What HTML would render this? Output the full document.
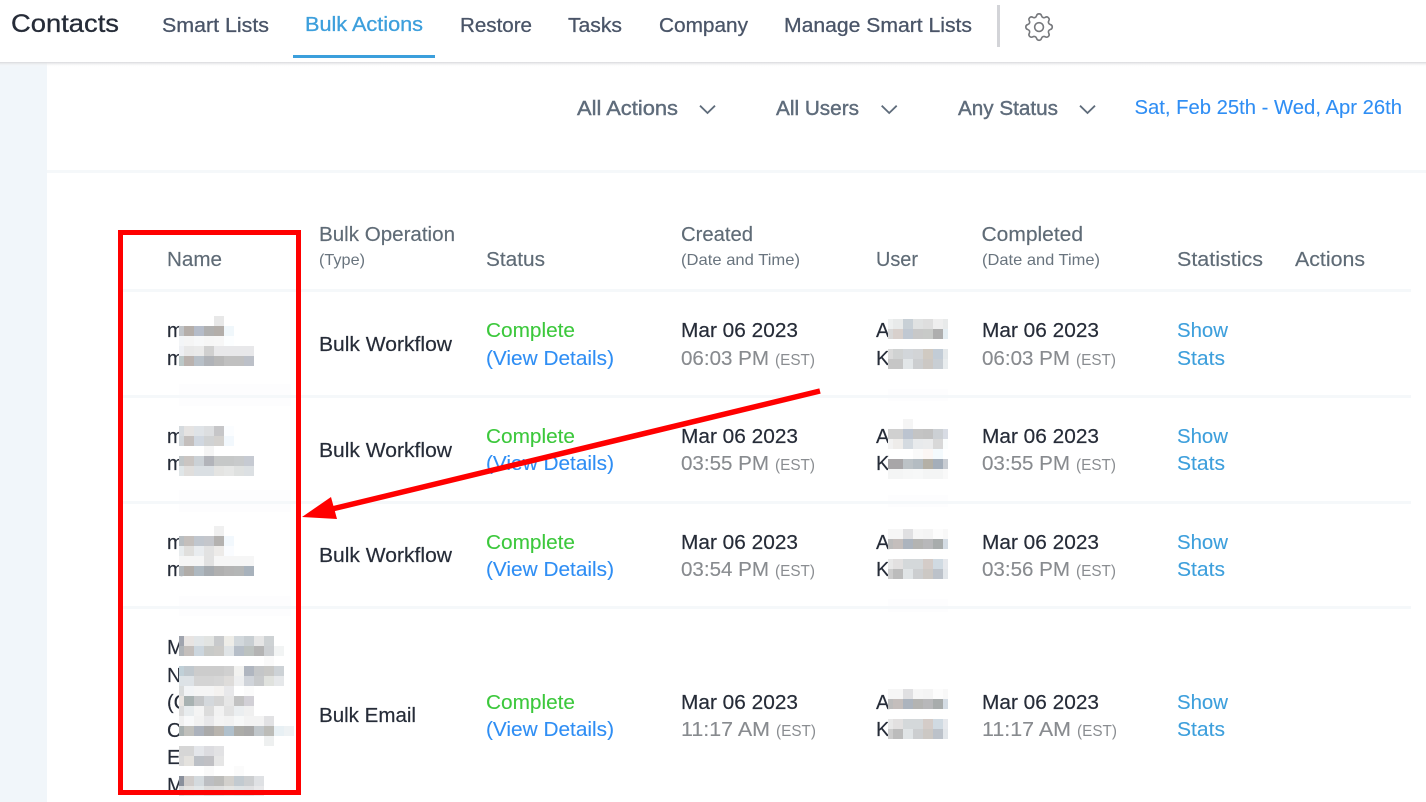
<!DOCTYPE html>
<html lang="en"><head><meta charset="utf-8"><title>Contacts - Bulk Actions</title>
<style>
html,body{margin:0;padding:0;background:#fff;width:1426px;height:802px;overflow:hidden}
svg{display:block}
text{font-family:"Liberation Sans",Arial,sans-serif;font-size:20px;fill:#262c38;stroke:#262c38;stroke-width:.18}
.n{fill:#4a5568;stroke:#4a5568;stroke-width:.28}
.a{fill:#3d9fdc;stroke:#3d9fdc;stroke-width:.3}
.f{fill:#5f6c7b;stroke:#5f6c7b;stroke-width:.4}
.b{fill:#2f8ef4;stroke:#2f8ef4;stroke-width:.1}
.h{fill:#5f6b76;stroke:#5f6b76;stroke-width:.15}
.s{fill:#69747e;stroke:none;font-size:16px}
.g{fill:#3cc83c;stroke:#3cc83c;stroke-width:.1}
.t{fill:#888b8f;stroke:#888b8f;stroke-width:.12}
.e{fill:#8a8d91;stroke:none;font-size:16px}
.l{fill:#3d9fdc;stroke:#3d9fdc;stroke-width:.1}
.m rect{width:10px;height:10px}
.m rect.p{width:5px}
.m{shape-rendering:crispEdges}
</style></head><body>
<svg width="1426" height="802" viewBox="0 0 1426 802" xmlns="http://www.w3.org/2000/svg">
<defs><linearGradient id="sh" x1="0" y1="0" x2="0" y2="1"><stop offset="0" stop-color="#d8d9dc"/><stop offset="1" stop-color="#fff" stop-opacity="0"/></linearGradient></defs>
<rect width="1426" height="802" fill="#fff"/>
<rect x="0" y="62" width="47" height="740" fill="#f1f6fa"/>
<rect x="0" y="62" width="1426" height="5" fill="url(#sh)"/>

<text x="11" y="32" style="font-size:25px;stroke-width:.3" textLength="108" lengthAdjust="spacingAndGlyphs">Contacts</text>
<text class="n" x="162" y="32" textLength="107" lengthAdjust="spacingAndGlyphs">Smart Lists</text>
<text class="a" x="305" y="31" textLength="118" lengthAdjust="spacingAndGlyphs">Bulk Actions</text>
<rect x="293" y="55" width="142" height="3" fill="#3b9fdc"/>
<text class="n" x="460" y="32" textLength="72" lengthAdjust="spacingAndGlyphs">Restore</text>
<text class="n" x="568" y="32" textLength="54" lengthAdjust="spacingAndGlyphs">Tasks</text>
<text class="n" x="659" y="32" textLength="89" lengthAdjust="spacingAndGlyphs">Company</text>
<text class="n" x="784" y="32" textLength="188" lengthAdjust="spacingAndGlyphs">Manage Smart Lists</text>
<rect x="997" y="5" width="3" height="42" fill="#d3d4d8"/>
<g transform="translate(1021.4 9.4) scale(1.47)" fill="none" stroke="#77797d" stroke-width="1.1" stroke-linejoin="round" stroke-linecap="round">
<path d="M10.325 4.317c.426-1.756 2.924-1.756 3.35 0a1.724 1.724 0 002.573 1.066c1.543-.94 3.31.826 2.37 2.37a1.724 1.724 0 001.065 2.572c1.756.426 1.756 2.924 0 3.35a1.724 1.724 0 00-1.066 2.573c.94 1.543-.826 3.31-2.37 2.37a1.724 1.724 0 00-2.572 1.065c-.426 1.756-2.924 1.756-3.35 0a1.724 1.724 0 00-2.573-1.066c-1.543.94-3.31-.826-2.37-2.37a1.724 1.724 0 00-1.065-2.572c-1.756-.426-1.756-2.924 0-3.35a1.724 1.724 0 001.066-2.573c-.94-1.543.826-3.31 2.37-2.37.996.608 2.296.07 2.572-1.065z"/>
<path d="M15 12a3 3 0 11-6 0 3 3 0 016 0z"/></g>

<text class="f" x="577" y="115" textLength="101" lengthAdjust="spacingAndGlyphs">All Actions</text>
<path d="M700 105.7l7.5 7.3 7.5-7.3" fill="none" stroke="#5f6c7b" stroke-width="1.8"/>
<text class="f" x="776" y="115" textLength="83" lengthAdjust="spacingAndGlyphs">All Users</text>
<path d="M881.7 105.7l7.5 7.3 7.5-7.3" fill="none" stroke="#5f6c7b" stroke-width="1.8"/>
<text class="f" x="958" y="115" textLength="100" lengthAdjust="spacingAndGlyphs">Any Status</text>
<path d="M1080 105.7l7.5 7.3 7.5-7.3" fill="none" stroke="#5f6c7b" stroke-width="1.8"/>
<text class="b" x="1134.5" y="114" textLength="267.5" lengthAdjust="spacingAndGlyphs">Sat, Feb 25th - Wed, Apr 26th</text>
<rect x="47" y="170" width="1379" height="3" fill="#f5f8fa"/>

<!-- header -->
<text class="h" x="167" y="266" textLength="55" lengthAdjust="spacingAndGlyphs">Name</text>
<text class="h" x="319" y="241" textLength="136" lengthAdjust="spacingAndGlyphs">Bulk Operation</text>
<text class="s" x="319" y="265" textLength="46" lengthAdjust="spacingAndGlyphs">(Type)</text>
<text class="h" x="486" y="266" textLength="59" lengthAdjust="spacingAndGlyphs">Status</text>
<text class="h" x="681" y="241" textLength="72" lengthAdjust="spacingAndGlyphs">Created</text>
<text class="s" x="681" y="265" textLength="119" lengthAdjust="spacingAndGlyphs">(Date and Time)</text>
<text class="h" x="876" y="266" textLength="42" lengthAdjust="spacingAndGlyphs">User</text>
<text class="h" x="981.5" y="241" textLength="101.5" lengthAdjust="spacingAndGlyphs">Completed</text>
<text class="s" x="982" y="265" textLength="118" lengthAdjust="spacingAndGlyphs">(Date and Time)</text>
<text class="h" x="1177" y="266" textLength="86" lengthAdjust="spacingAndGlyphs">Statistics</text>
<text class="h" x="1295" y="266" textLength="70" lengthAdjust="spacingAndGlyphs">Actions</text>

<!-- row dividers -->
<g fill="#f5f8fa">
<rect x="119" y="289" width="1292" height="3"/><rect x="119" y="395" width="1292" height="3"/><rect x="119" y="501" width="1292" height="3"/><rect x="119" y="606" width="1292" height="3"/>
</g>
<g fill="#fdfdfe">
<rect x="179" y="384" width="112" height="11"/><rect x="179" y="398" width="112" height="8"/><rect x="179" y="490" width="112" height="11"/><rect x="179" y="504" width="112" height="8"/><rect x="179" y="596" width="112" height="10"/><rect x="179" y="609" width="112" height="7"/>
<rect x="888" y="389" width="60" height="6"/><rect x="888" y="398" width="60" height="3"/><rect x="888" y="495" width="60" height="6"/><rect x="888" y="504" width="60" height="3"/><rect x="888" y="599" width="60" height="7"/><rect x="888" y="609" width="60" height="3"/>
</g>

<!-- row 1 -->
<text x="167" y="337">m</text><text x="167" y="365">m</text>
<text x="319" y="351" textLength="133" lengthAdjust="spacingAndGlyphs">Bulk Workflow</text>
<text class="g" x="486" y="337" textLength="89" lengthAdjust="spacingAndGlyphs">Complete</text>
<text class="b" x="486" y="365" textLength="128" lengthAdjust="spacingAndGlyphs">(View Details)</text>
<text x="681" y="337" textLength="117" lengthAdjust="spacingAndGlyphs">Mar 06 2023</text>
<text class="t" x="681" y="365" textLength="88" lengthAdjust="spacingAndGlyphs">06:03 PM</text>
<text class="e" x="775" y="365" textLength="40" lengthAdjust="spacingAndGlyphs">(EST)</text>
<text x="876" y="337">A</text><text x="876" y="365">K</text>
<text x="982" y="337" textLength="117" lengthAdjust="spacingAndGlyphs">Mar 06 2023</text>
<text class="t" x="982" y="365" textLength="88" lengthAdjust="spacingAndGlyphs">06:03 PM</text>
<text class="e" x="1076" y="365" textLength="40" lengthAdjust="spacingAndGlyphs">(EST)</text>
<text class="l" x="1177" y="337" textLength="51" lengthAdjust="spacingAndGlyphs">Show</text>
<text class="l" x="1177" y="365" textLength="48" lengthAdjust="spacingAndGlyphs">Stats</text>

<!-- row 2 -->
<text x="167" y="443">m</text><text x="167" y="470">m</text>
<text x="319" y="457" textLength="133" lengthAdjust="spacingAndGlyphs">Bulk Workflow</text>
<text class="g" x="486" y="443" textLength="89" lengthAdjust="spacingAndGlyphs">Complete</text>
<text class="b" x="486" y="470" textLength="128" lengthAdjust="spacingAndGlyphs">(View Details)</text>
<text x="681" y="443" textLength="117" lengthAdjust="spacingAndGlyphs">Mar 06 2023</text>
<text class="t" x="681" y="470" textLength="88" lengthAdjust="spacingAndGlyphs">03:55 PM</text>
<text class="e" x="775" y="470" textLength="40" lengthAdjust="spacingAndGlyphs">(EST)</text>
<text x="876" y="443">A</text><text x="876" y="470">K</text>
<text x="982" y="443" textLength="117" lengthAdjust="spacingAndGlyphs">Mar 06 2023</text>
<text class="t" x="982" y="470" textLength="88" lengthAdjust="spacingAndGlyphs">03:55 PM</text>
<text class="e" x="1076" y="470" textLength="40" lengthAdjust="spacingAndGlyphs">(EST)</text>
<text class="l" x="1177" y="443" textLength="51" lengthAdjust="spacingAndGlyphs">Show</text>
<text class="l" x="1177" y="470" textLength="48" lengthAdjust="spacingAndGlyphs">Stats</text>

<!-- row 3 -->
<text x="167" y="549">m</text><text x="167" y="576">m</text>
<text x="319" y="562" textLength="133" lengthAdjust="spacingAndGlyphs">Bulk Workflow</text>
<text class="g" x="486" y="549" textLength="89" lengthAdjust="spacingAndGlyphs">Complete</text>
<text class="b" x="486" y="576" textLength="128" lengthAdjust="spacingAndGlyphs">(View Details)</text>
<text x="681" y="549" textLength="117" lengthAdjust="spacingAndGlyphs">Mar 06 2023</text>
<text class="t" x="681" y="576" textLength="88" lengthAdjust="spacingAndGlyphs">03:54 PM</text>
<text class="e" x="775" y="576" textLength="40" lengthAdjust="spacingAndGlyphs">(EST)</text>
<text x="876" y="549">A</text><text x="876" y="576">K</text>
<text x="982" y="549" textLength="117" lengthAdjust="spacingAndGlyphs">Mar 06 2023</text>
<text class="t" x="982" y="576" textLength="88" lengthAdjust="spacingAndGlyphs">03:56 PM</text>
<text class="e" x="1076" y="576" textLength="40" lengthAdjust="spacingAndGlyphs">(EST)</text>
<text class="l" x="1177" y="549" textLength="51" lengthAdjust="spacingAndGlyphs">Show</text>
<text class="l" x="1177" y="576" textLength="48" lengthAdjust="spacingAndGlyphs">Stats</text>

<!-- row 4 -->
<text x="167" y="654">M</text><text x="167" y="682">N</text><text x="167" y="709">(C</text><text x="167" y="737">C</text><text x="167" y="764">E</text><text x="167" y="792">M</text>
<text x="319" y="722" textLength="97" lengthAdjust="spacingAndGlyphs">Bulk Email</text>
<text class="g" x="486" y="709" textLength="89" lengthAdjust="spacingAndGlyphs">Complete</text>
<text class="b" x="486" y="736" textLength="128" lengthAdjust="spacingAndGlyphs">(View Details)</text>
<text x="681" y="709" textLength="117" lengthAdjust="spacingAndGlyphs">Mar 06 2023</text>
<text class="t" x="681" y="736" textLength="89" lengthAdjust="spacingAndGlyphs">11:17 AM</text>
<text class="e" x="776" y="736" textLength="40" lengthAdjust="spacingAndGlyphs">(EST)</text>
<text x="876" y="709">A</text><text x="876" y="736">K</text>
<text x="982" y="709" textLength="117" lengthAdjust="spacingAndGlyphs">Mar 06 2023</text>
<text class="t" x="982" y="736" textLength="89" lengthAdjust="spacingAndGlyphs">11:17 AM</text>
<text class="e" x="1077" y="736" textLength="40" lengthAdjust="spacingAndGlyphs">(EST)</text>
<text class="l" x="1177" y="709" textLength="51" lengthAdjust="spacingAndGlyphs">Show</text>
<text class="l" x="1177" y="736" textLength="48" lengthAdjust="spacingAndGlyphs">Stats</text>

<!-- name mosaics: row 1 -->
<g class="m" transform="translate(0 316)"><rect x="214" fill="#e8e8e8"/></g>
<g class="m" transform="translate(0 326)"><rect class="p" x="179" fill="#c0c4c8"/><rect x="184" fill="#b5aea9"/><rect x="194" fill="#b5bcc9"/><rect x="204" fill="#b0b0b0"/><rect x="214" fill="#b3aeaa"/><rect x="224" fill="#f0f7fb"/></g>
<g class="m" transform="translate(0 336)"><rect class="p" x="179" fill="#f3f5f7"/><rect x="184" fill="#f5f5f5"/><rect x="194" fill="#f7f8f9"/><rect x="204" fill="#f6f6f6"/><rect x="214" fill="#f7f7f7"/><rect x="224" fill="#fcfeff"/></g>
<g class="m" transform="translate(0 346)"><rect class="p" x="179" fill="#eef0f4"/><rect x="184" fill="#e8e8e8"/><rect x="194" fill="#eaeaea"/><rect x="204" fill="#d0d0d0"/><rect x="214" fill="#e8e8ea"/><rect x="224" fill="#e8e8ea"/><rect x="234" fill="#e8e8ea"/><rect x="244" fill="#e8e8ea"/></g>
<g class="m" transform="translate(0 356)"><rect class="p" x="179" fill="#bcc8c8"/><rect x="184" fill="#bab2ae"/><rect x="194" fill="#b8c0c8"/><rect x="204" fill="#b0b3b8"/><rect x="214" fill="#b8b8b8"/><rect x="224" fill="#c0c0c0"/><rect x="234" fill="#c0c0c0"/><rect x="244" fill="#bcc0c8"/></g>

<!-- name mosaics: row 2 -->
<g class="m" transform="translate(0 426)"><rect class="p" x="179" fill="#d5dade"/><rect x="184" fill="#e5e3e2"/><rect x="194" fill="#dfe3e7"/><rect x="204" fill="#dcdee0"/><rect x="214" fill="#c6c6c8"/><rect x="224" fill="#fbfdff"/></g>
<g class="m" transform="translate(0 436)"><rect class="p" x="179" fill="#d0d6da"/><rect x="184" fill="#c4bfbd"/><rect x="194" fill="#d0d7e0"/><rect x="204" fill="#d0d2d3"/><rect x="214" fill="#d3d1ce"/><rect x="224" fill="#f2f8fd"/></g>
<g class="m" transform="translate(0 446)"><rect x="204" fill="#f5f5f5"/></g>
<g class="m" transform="translate(0 456)"><rect class="p" x="179" fill="#c0c6c8"/><rect x="184" fill="#cac5c2"/><rect x="194" fill="#cbd1d6"/><rect x="204" fill="#b2b4ba"/><rect x="214" fill="#c6c8c8"/><rect x="224" fill="#c6c8c8"/><rect x="234" fill="#c8cacb"/><rect x="244" fill="#c6cad2"/></g>
<g class="m" transform="translate(0 466)"><rect class="p" x="179" fill="#e0e6e8"/><rect x="184" fill="#e0dedc"/><rect x="194" fill="#dadfe3"/><rect x="204" fill="#dadfe3"/><rect x="214" fill="#e4e4e2"/><rect x="224" fill="#e6e7e6"/><rect x="234" fill="#dfe1e0"/><rect x="244" fill="#dce0e3"/></g>

<!-- name mosaics: row 3 -->
<g class="m" transform="translate(0 526)"><rect x="214" fill="#f0f0f0"/></g>
<g class="m" transform="translate(0 536)"><rect class="p" x="179" fill="#b8bec2"/><rect x="184" fill="#c4bfbc"/><rect x="194" fill="#c0c6ce"/><rect x="204" fill="#c4c6cb"/><rect x="214" fill="#b4b2b0"/><rect x="224" fill="#f2f8fd"/></g>
<g class="m" transform="translate(0 546)"><rect class="p" x="179" fill="#e8ecee"/><rect x="184" fill="#e0dfdd"/><rect x="194" fill="#e9ecef"/><rect x="204" fill="#e2e2e2"/><rect x="214" fill="#edebe9"/><rect x="224" fill="#fafcff"/></g>
<g class="m" transform="translate(0 556)"><rect class="p" x="179" fill="#f5f5f5"/><rect x="184" fill="#f5f5f5"/><rect x="194" fill="#f5f5f5"/><rect x="204" fill="#e2e2e2"/><rect x="214" fill="#f6f6f6"/><rect x="224" fill="#f6f6f6"/><rect x="234" fill="#f6f6f6"/><rect x="244" fill="#f6f6f6"/></g>
<g class="m" transform="translate(0 566)"><rect class="p" x="179" fill="#b0b6ba"/><rect x="184" fill="#b0aca8"/><rect x="194" fill="#aeb8c0"/><rect x="204" fill="#a6abb0"/><rect x="214" fill="#b0b0b0"/><rect x="224" fill="#b4b4b4"/><rect x="234" fill="#b4b6b6"/><rect x="244" fill="#a8b2bc"/></g>

<!-- name mosaics: row 4 -->
<g class="m" transform="translate(0 636)"><rect class="p" x="179" fill="#a0a4ae"/><rect x="184" fill="#e8e4e2"/><rect x="194" fill="#e2e6e8"/><rect x="204" fill="#e2e4e2"/><rect x="214" fill="#c8cacc"/><rect x="224" fill="#eeede8"/><rect x="234" fill="#d2d8dc"/><rect x="244" fill="#c8ced2"/><rect x="254" fill="#e6e6e6"/><rect x="264" fill="#ced2d4"/></g>
<g class="m" transform="translate(0 646)"><rect class="p" x="179" fill="#b0b4b8"/><rect x="184" fill="#c4bfbc"/><rect x="194" fill="#ccd6de"/><rect x="204" fill="#c8cac8"/><rect x="214" fill="#cccbc8"/><rect x="224" fill="#e0e4e6"/><rect x="234" fill="#b6bec8"/><rect x="244" fill="#bcc2c0"/><rect x="254" fill="#b4b4b4"/><rect x="264" fill="#cccfd2"/><rect x="274" fill="#f2f4f4"/></g>
<g class="m" transform="translate(0 656)"><rect x="264" fill="#fafafa"/></g>
<g class="m" transform="translate(0 666)"><rect class="p" x="179" fill="#c0d0d8"/><rect x="184" fill="#c0c8ce"/><rect x="194" fill="#cccccc"/><rect x="204" fill="#cccccc"/><rect x="214" fill="#cccccc"/><rect x="224" fill="#d0d0d0"/><rect x="234" fill="#f2f2f0"/><rect x="244" fill="#b0b6c0"/><rect x="254" fill="#c4c6c8"/><rect x="264" fill="#c8c8c6"/><rect x="274" fill="#cdd2d6"/></g>
<g class="m" transform="translate(0 676)"><rect class="p" x="179" fill="#dce2e6"/><rect x="184" fill="#dde2e6"/><rect x="194" fill="#d4d4d4"/><rect x="204" fill="#d4d4d4"/><rect x="214" fill="#d6d6d6"/><rect x="224" fill="#dedcda"/><rect x="234" fill="#eeeff0"/><rect x="244" fill="#d0d4da"/><rect x="254" fill="#c8cacc"/><rect x="264" fill="#e0e2de"/><rect x="274" fill="#e6e8ea"/></g>
<g class="m" transform="translate(0 686)"><rect class="p" x="179" fill="#dadcdc"/><rect x="184" fill="#f2f4f6"/><rect x="194" fill="#f5f5f5"/><rect x="204" fill="#f5f5f5"/><rect x="214" fill="#f4f2f0"/><rect x="224" fill="#e8e8ea"/><rect x="234" fill="#ffffff"/><rect x="244" fill="#fbfbfb"/></g>
<g class="m" transform="translate(0 696)"><rect class="p" x="179" fill="#e8e4e0"/><rect x="184" fill="#a8b2b2"/><rect x="194" fill="#c4c6c8"/><rect x="204" fill="#d4d8dc"/><rect x="214" fill="#d4d4d4"/><rect x="224" fill="#e6e6e6"/><rect x="234" fill="#c2c2c2"/><rect x="244" fill="#d2d0d6"/></g>
<g class="m" transform="translate(0 706)"><rect class="p" x="179" fill="#dcdcdc"/><rect x="184" fill="#e8ecee"/><rect x="194" fill="#f4f4f4"/><rect x="204" fill="#dcdcdc"/><rect x="214" fill="#f2f2f2"/><rect x="224" fill="#e2e2e2"/><rect x="234" fill="#ebeef0"/><rect x="244" fill="#f0f0f0"/></g>
<g class="m" transform="translate(0 716)"><rect class="p" x="179" fill="#f0f0f0"/><rect x="184" fill="#f8f9fa"/><rect x="194" fill="#f2f2f2"/><rect x="204" fill="#e8e8ea"/><rect x="214" fill="#f4f4f4"/><rect x="224" fill="#f2f2f2"/><rect x="234" fill="#f7f8f8"/><rect x="244" fill="#f3f3f3"/><rect x="254" fill="#f3f3f3"/><rect x="264" fill="#e2e2e4"/></g>
<g class="m" transform="translate(0 726)"><rect class="p" x="179" fill="#a8b0b0"/><rect x="184" fill="#c0c0bc"/><rect x="194" fill="#acb2bc"/><rect x="204" fill="#aaaaaa"/><rect x="214" fill="#b8b4ae"/><rect x="224" fill="#b0c0cc"/><rect x="234" fill="#acaca8"/><rect x="244" fill="#a8a8a8"/><rect x="254" fill="#c0c6ca"/><rect x="264" fill="#bcbcb8"/><rect x="274" fill="#e8f0f4"/><rect x="284" fill="#eef2f4"/></g>
<g class="m" transform="translate(0 736)"><rect x="264" fill="#eef0f0"/></g>
<g class="m" transform="translate(0 746)"><rect class="p" x="179" fill="#d6d6d6"/><rect x="184" fill="#d6d6d6"/><rect x="194" fill="#e4e6ea"/><rect x="204" fill="#dcdce0"/><rect x="214" fill="#e2e2e4"/></g>
<g class="m" transform="translate(0 756)"><rect class="p" x="179" fill="#d8d8d8"/><rect x="184" fill="#e4e2de"/><rect x="194" fill="#bcc0c6"/><rect x="204" fill="#c0c0c4"/><rect x="214" fill="#e6e6e6"/></g>
<g class="m" transform="translate(0 766)"><rect x="204" fill="#fafafa"/><rect x="234" fill="#fbfbfb"/></g>
<g class="m" transform="translate(0 776)"><rect class="p" x="179" fill="#8a909c"/><rect x="184" fill="#d0ccca"/><rect x="194" fill="#d4dade"/><rect x="204" fill="#bcbec2"/><rect x="214" fill="#bcbcba"/><rect x="224" fill="#d2d0cc"/><rect x="234" fill="#c2cad0"/><rect x="244" fill="#ccced0"/><rect x="254" fill="#dfe1e4"/></g>
<g class="m" transform="translate(0 786)"><rect class="p" x="179" fill="#d8dadc"/><rect x="184" fill="#e4e2e0"/><rect x="194" fill="#e2e6e8"/><rect x="204" fill="#dcdcdc"/><rect x="214" fill="#dedede"/><rect x="224" fill="#e4e4e2"/><rect x="234" fill="#dee2e4"/><rect x="244" fill="#e0e0e2"/><rect x="254" fill="#e8e8ea"/></g>

<!-- user mosaics: row 1 -->
<g class="m" transform="translate(0 319)"><rect class="p" x="888" fill="#eef0f0"/><rect x="893" fill="#e8eaea"/><rect x="903" fill="#c8d0d6"/><rect x="913" fill="#e0e2e2"/><rect x="923" fill="#dedede"/><rect x="933" fill="#eeeeee"/><rect class="p" x="943" fill="#e8eaea"/></g>
<g class="m" transform="translate(0 329)"><rect class="p" x="888" fill="#d8d8d8"/><rect x="893" fill="#d8d0cc"/><rect x="903" fill="#c0c8d2"/><rect x="913" fill="#c8c8c8"/><rect x="923" fill="#c8cac8"/><rect x="933" fill="#aeaeae"/><rect class="p" x="943" fill="#e4edf2"/></g>
<g class="m" transform="translate(0 349)"><rect class="p" x="888" fill="#dadada"/><rect x="893" fill="#d0d2d2"/><rect x="903" fill="#d2d6da"/><rect x="913" fill="#d2d4d6"/><rect x="923" fill="#d0cac2"/><rect x="933" fill="#c2ccd6"/><rect class="p" x="943" fill="#e4e8ea"/></g>
<g class="m" transform="translate(0 359)"><rect class="p" x="888" fill="#c6c6c6"/><rect x="893" fill="#c6c6c6"/><rect x="903" fill="#e2e6e8"/><rect x="913" fill="#ccced0"/><rect x="923" fill="#ccc8c4"/><rect x="933" fill="#c8ced4"/><rect class="p" x="943" fill="#e8ecee"/></g>

<!-- user mosaics: row 2 -->
<g class="m" transform="translate(0 419)"><rect x="903" fill="#f5f5f5"/></g>
<g class="m" transform="translate(0 429)"><rect class="p" x="888" fill="#d0d0d0"/><rect x="893" fill="#d0d0d0"/><rect x="903" fill="#bcc4d0"/><rect x="913" fill="#c4c4c4"/><rect x="923" fill="#c2c2c2"/><rect x="933" fill="#ccd0d4"/><rect class="p" x="943" fill="#d8dce4"/></g>
<g class="m" transform="translate(0 439)"><rect class="p" x="888" fill="#f2f2f2"/><rect x="893" fill="#eeecea"/><rect x="903" fill="#d4dae0"/><rect x="913" fill="#e8eaec"/><rect x="923" fill="#eaebec"/><rect x="933" fill="#d8d8d8"/><rect class="p" x="943" fill="#fafdfd"/></g>
<g class="m" transform="translate(0 449)"><rect x="913" fill="#fafafa"/><rect x="923" fill="#fbf6f4"/><rect x="933" fill="#f4fafd"/></g>
<g class="m" transform="translate(0 459)"><rect class="p" x="888" fill="#a8a6a8"/><rect x="893" fill="#a8a6a8"/><rect x="903" fill="#bcc2c6"/><rect x="913" fill="#b4bcc2"/><rect x="923" fill="#b4b0a6"/><rect x="933" fill="#a4aeba"/><rect class="p" x="943" fill="#c8ccd2"/></g>
<g class="m" transform="translate(0 469)"><rect class="p" x="888" fill="#f4f5f5"/><rect x="893" fill="#f4f5f5"/><rect x="903" fill="#f6f7f7"/><rect x="913" fill="#f7f8f8"/><rect x="923" fill="#f4f5f5"/><rect x="933" fill="#f4f5f5"/><rect class="p" x="943" fill="#f9f9f9"/></g>

<!-- user mosaics: row 3 -->
<g class="m" transform="translate(0 529)"><rect class="p" x="888" fill="#f6f6f6"/><rect x="893" fill="#f6f6f6"/><rect x="903" fill="#e0e0e2"/><rect x="913" fill="#f6f6f6"/><rect x="923" fill="#f4f4f4"/><rect x="933" fill="#fcfcfc"/><rect class="p" x="943" fill="#f8f8f8"/></g>
<g class="m" transform="translate(0 539)"><rect class="p" x="888" fill="#bcbcbc"/><rect x="893" fill="#c4bebc"/><rect x="903" fill="#acb4be"/><rect x="913" fill="#b4b4b2"/><rect x="923" fill="#b8b8ba"/><rect x="933" fill="#a8acac"/><rect class="p" x="943" fill="#d4dce4"/></g>
<g class="m" transform="translate(0 559)"><rect class="p" x="888" fill="#e8e8e8"/><rect x="893" fill="#e2e0e0"/><rect x="903" fill="#d4d8da"/><rect x="913" fill="#d4d8da"/><rect x="923" fill="#d4ccc8"/><rect x="933" fill="#d0dae2"/><rect class="p" x="943" fill="#e6e8ec"/></g>
<g class="m" transform="translate(0 569)"><rect class="p" x="888" fill="#cccccc"/><rect x="893" fill="#bcbcbc"/><rect x="903" fill="#e0e4e6"/><rect x="913" fill="#ccced0"/><rect x="923" fill="#ccc8c4"/><rect x="933" fill="#bcc2ca"/><rect class="p" x="943" fill="#e2e6ea"/></g>

<!-- user mosaics: row 4 -->
<g class="m" transform="translate(0 689)"><rect class="p" x="888" fill="#f6f6f6"/><rect x="893" fill="#f6f6f6"/><rect x="903" fill="#e0e0e2"/><rect x="913" fill="#f6f6f6"/><rect x="923" fill="#f4f4f4"/><rect x="933" fill="#fcfcfc"/><rect class="p" x="943" fill="#f8f8f8"/></g>
<g class="m" transform="translate(0 699)"><rect class="p" x="888" fill="#bcbcbc"/><rect x="893" fill="#c4bebc"/><rect x="903" fill="#acb4be"/><rect x="913" fill="#b4b4b2"/><rect x="923" fill="#b8b8ba"/><rect x="933" fill="#a8acac"/><rect class="p" x="943" fill="#d4dce4"/></g>
<g class="m" transform="translate(0 719)"><rect class="p" x="888" fill="#e8e8e8"/><rect x="893" fill="#e2e0e0"/><rect x="903" fill="#d4d8da"/><rect x="913" fill="#d4d8da"/><rect x="923" fill="#d4ccc8"/><rect x="933" fill="#d0dae2"/><rect class="p" x="943" fill="#e6e8ec"/></g>
<g class="m" transform="translate(0 729)"><rect class="p" x="888" fill="#cccccc"/><rect x="893" fill="#bcbcbc"/><rect x="903" fill="#e0e4e6"/><rect x="913" fill="#ccced0"/><rect x="923" fill="#ccc8c4"/><rect x="933" fill="#bcc2ca"/><rect class="p" x="943" fill="#e2e6ea"/></g>

<!-- annotations -->
<rect x="120.5" y="232.5" width="178" height="560" fill="none" stroke="#ff0000" stroke-width="5"/>
<path d="M820 391L332 509" stroke="#ff0000" stroke-width="5.5" fill="none"/>
<path d="M302 517L331 497L337 519Z" fill="#ff0000"/>
</svg>
</body></html>
